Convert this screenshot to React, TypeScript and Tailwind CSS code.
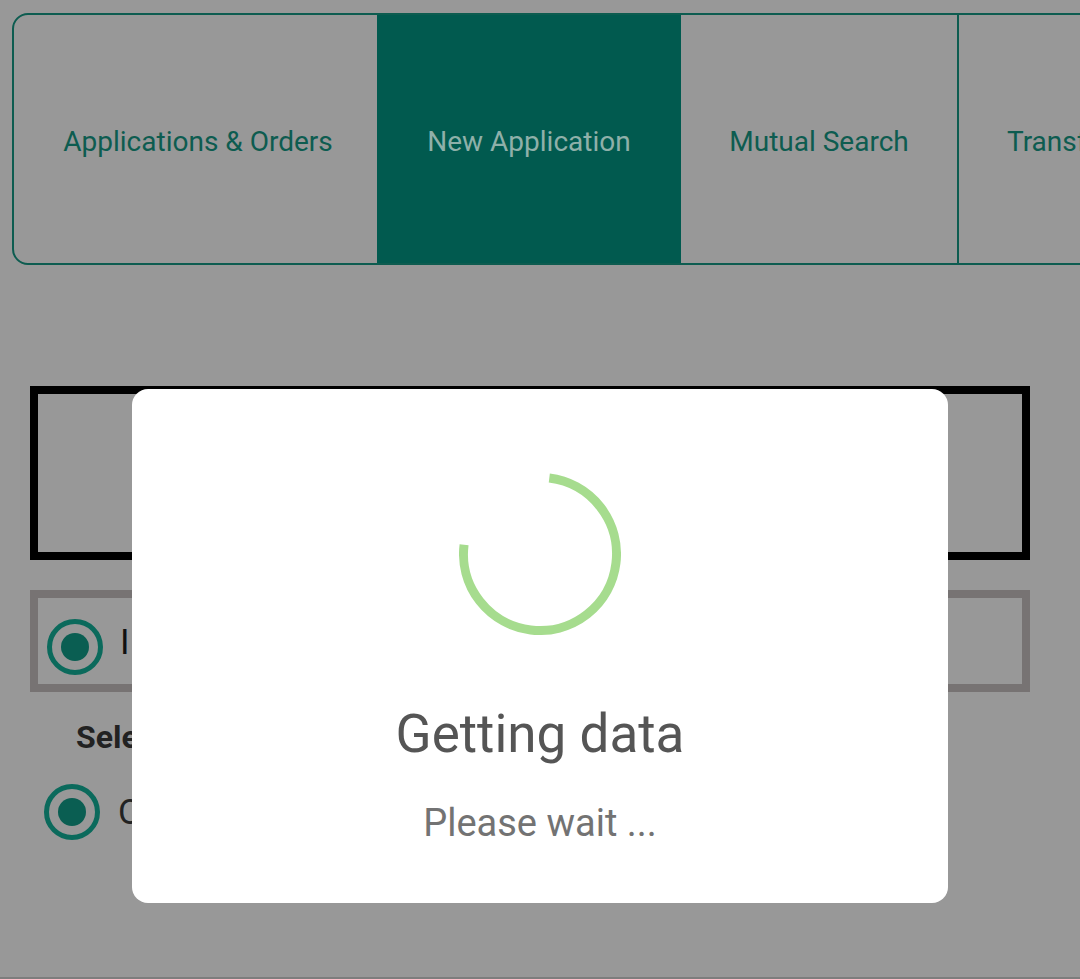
import React from "react";

const tabs = [
  { label: "Applications & Orders", width: "w-[363px] pl-[5px]", active: false },
  { label: "New Application", width: "w-[304px]", active: true },
  { label: "Mutual Search", width: "w-[276px]", active: false },
  { label: "Transfer Orders", width: "w-[300px]", active: false },
];

function Radio() {
  return (
    <div className="flex h-[56px] w-[56px] shrink-0 items-center justify-center rounded-full border-[5px] border-[#0b6a5c]">
      <div className="h-[28px] w-[28px] rounded-full bg-[#0a5e52]" />
    </div>
  );
}

function Spinner() {
  return (
    <svg width="162" height="162" viewBox="0 0 162 162">
      <path
        d="M 90.3 5.07 A 76.5 76.5 0 1 1 5.07 71.68"
        fill="none"
        stroke="#a6dc8e"
        strokeWidth="9"
      />
    </svg>
  );
}

export default function App() {
  return (
    <div
      className="relative h-[979px] w-[1080px] overflow-hidden bg-[#989898]"
      style={{ fontFamily: "Roboto, 'Noto Sans', sans-serif" }}
    >
      {/* Tab bar */}
      <div className="ml-[12px] mt-[13px] flex h-[252px] w-[1200px] rounded-l-[16px] border-2 border-[#0d5c50]">
        {tabs.map((t, i) => (
          <div
            key={t.label}
            className={`flex shrink-0 items-center justify-center pt-[6px] text-[28px] ${t.width} ${
              t.active ? "bg-[#015a4f] text-[#8fb0a9]" : "text-[#0d5c50]"
            } ${i === 0 ? "rounded-l-[14px]" : ""} ${i === 3 ? "border-l-2 border-[#0d5c50] justify-start pl-[48px]" : ""}`}
          >
            {t.label}
          </div>
        ))}
      </div>

      {/* Page content behind the dialog */}
      <div className="ml-[30px] mt-[121px] h-[174px] w-[1000px] border-[8px] border-black" />

      <div className="ml-[30px] mt-[30px] flex h-[102px] w-[1000px] items-start gap-[17px] border-[8px] border-[#777373] pl-[9px] pt-[21px]">
        <Radio />
        <span className="mt-[6px] text-[35px] leading-[35px] text-[#111]">I have read the rules</span>
      </div>

      <div className="ml-[76px] mt-[29px] text-[32px] font-bold leading-[32px] text-[#222]">
        Select Transfer Type
      </div>

      <div className="ml-[44px] mt-[31px] flex items-center gap-[18px]">
        <Radio />
        <span className="text-[35px] leading-[35px] text-[#222]">Ordinary</span>
      </div>

      <div className="absolute bottom-0 left-0 h-[2px] w-full bg-[#7d7d7d]" />

      {/* Loading dialog */}
      <div className="absolute left-[132px] top-[389px] flex h-[514px] w-[816px] flex-col items-center rounded-[16px] bg-white pt-[84px]">
        <Spinner />
        <div className="mt-[73px] text-[53px] leading-[52px] text-[#555555]">Getting data</div>
        <div className="mt-[45px] text-[38px] leading-[37px] text-[#737373]">Please wait ...</div>
      </div>
    </div>
  );
}
